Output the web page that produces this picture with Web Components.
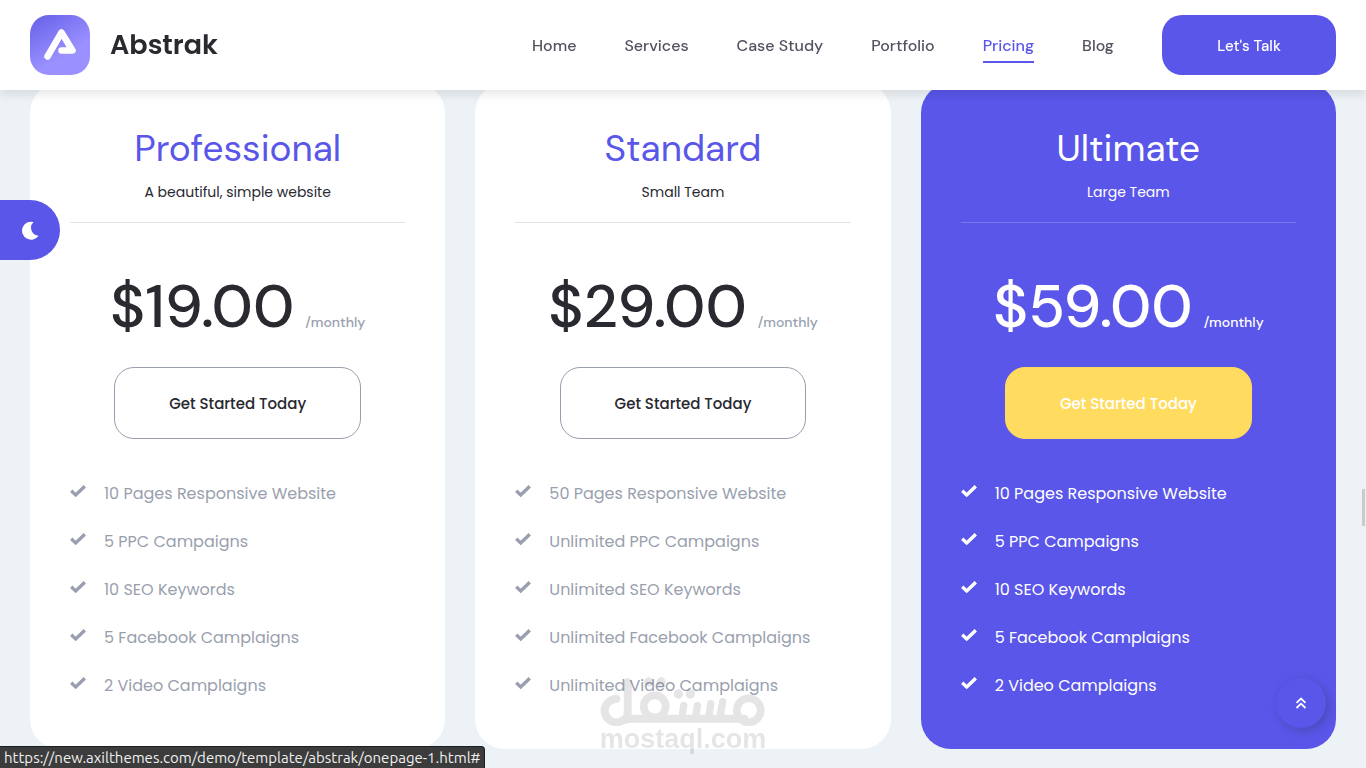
<!DOCTYPE html>
<html lang="en">
<head>
<meta charset="utf-8">
<title>Abstrak - Pricing</title>
<style>
  :root {
    --primary: #5956e9;
    --dark: #292930;
    --body: #525260;
    --muted: #999fae;
    --line: #dfe5ea;
    --yellow: #ffdc60;
    --heading: "DM Sans", Inter, sans-serif;
    --text: Poppins, "Open Sans", sans-serif;
  }
  body { margin: 0; min-height: 100vh; background: #ecf2f6; font-family: var(--text); color: var(--dark); }
</style>
</head>
<body>
<site-header></site-header>
<pricing-section>
  <pricing-card plan="Professional" price="$19.00" features="10 Pages Responsive Website|5 PPC Campaigns|10 SEO Keywords|5 Facebook Camplaigns|2 Video Camplaigns">A beautiful, simple website</pricing-card>
  <pricing-card plan="Standard" price="$29.00" features="50 Pages Responsive Website|Unlimited PPC Campaigns|Unlimited SEO Keywords|Unlimited Facebook Camplaigns|Unlimited Video Camplaigns">Small Team</pricing-card>
  <pricing-card active plan="Ultimate" price="$59.00" features="10 Pages Responsive Website|5 PPC Campaigns|10 SEO Keywords|5 Facebook Camplaigns|2 Video Camplaigns">Large Team</pricing-card>
</pricing-section>
<theme-toggle></theme-toggle>
<back-to-top></back-to-top>
<scroll-thumb></scroll-thumb>
<water-mark></water-mark>
<status-bar>https://new.axilthemes.com/demo/template/abstrak/onepage-1.html#</status-bar>

<script>
function define(name, render) {
  customElements.define(name, class extends HTMLElement {
    connectedCallback() {
      if (this.shadowRoot) return;
      const t = document.createElement('template');
      t.innerHTML = render(this);
      this.attachShadow({ mode: 'open' }).append(t.content.cloneNode(true));
    }
  });
}

define('nav-item', el => `
  <style>
    :host { display: block; }
    a { position: relative; display: block; padding-top: 2px; font: 500 16px/32px var(--heading); color: var(--body); text-decoration: none; }
    :host([current]) a { color: var(--primary); }
    :host([current]) a::after { content: ""; position: absolute; left: 0; right: 0; bottom: -1px; height: 2px; background: var(--primary); }
  </style>
  <a href="#"><slot></slot></a>`);

define('site-header', () => `
  <style>
    :host { display: block; position: fixed; inset: 0 0 auto 0; z-index: 5; background: #fff; box-shadow: 0 4px 10px rgba(0,0,0,.1); }
    header { display: flex; align-items: center; justify-content: space-between; height: 90px; padding: 0 30px; }
    .brand { display: flex; align-items: center; gap: 20px; color: var(--dark); text-decoration: none; font: 600 27px/40px var(--text); }
    .brand svg { display: block; }
    nav { display: flex; align-items: center; gap: 48px; }
    button { width: 174px; height: 60px; padding: 2px 0 0; border: 0; border-radius: 20px; background: var(--primary); color: #fff; font: 500 15px/24px var(--heading); }
  </style>
  <header>
    <a class="brand" href="#">
      <svg width="60" height="60" viewBox="0 0 60 60" aria-hidden="true">
        <defs><linearGradient id="g" x1="0" y1="0" x2=".6" y2="1"><stop offset=".1" stop-color="#6b66ea"/><stop offset=".75" stop-color="#9a90ff"/></linearGradient></defs>
        <rect width="60" height="60" rx="19" fill="url(#g)"/>
        <path d="M17.500 41.500L31.500 17.500L42.500 35.500H31.500" fill="none" stroke="#fff" stroke-width="6.500" stroke-linecap="round" stroke-linejoin="round"/>
      </svg>
      <span>Abstrak</span>
    </a>
    <nav>
      <nav-item>Home</nav-item><nav-item>Services</nav-item><nav-item>Case Study</nav-item>
      <nav-item>Portfolio</nav-item><nav-item current>Pricing</nav-item><nav-item>Blog</nav-item>
      <button type="button">Let's Talk</button>
    </nav>
  </header>`);

define('pricing-section', () => `
  <style>
    :host { display: grid; grid-template-columns: repeat(3, minmax(0, 1fr)); gap: 30px; padding: 83px 30px 19px; }
  </style>
  <slot></slot>`);

define('check-item', () => `
  <style>
    :host { display: flex; align-items: center; gap: 18px; font: 400 16px/48px var(--text); }
    svg { flex: none; padding-bottom: 6px; }
  </style>
  <svg width="16" height="14" viewBox="0 0 16 14" aria-hidden="true"><path d="M1.200 6.800L5.700 11L14.800 2.200" fill="none" stroke="currentColor" stroke-width="3.400"/></svg>
  <span><slot></slot></span>`);

define('pricing-card', el => `
  <style>
    :host { display: block; box-sizing: border-box; padding: 38px 40px 39px; border-radius: 30px; background: #fff; text-align: center; }
    h2 { margin: 0; font: 400 37px/54px var(--heading); color: var(--primary); }
    .sub { margin: 5px 0 0; padding-bottom: 18px; border-bottom: 1px solid var(--line); font: 400 14px/24px var(--text); }
    .price { display: flex; align-items: baseline; justify-content: center; gap: 11px; margin-top: 48px; }
    .amount { font: 500 60px/72px var(--heading); }
    .per { font: 500 14px/24px var(--heading); color: var(--muted); }
    button { height: 72px; margin-top: 24px; padding: 2px 54px 0; border: 1px solid var(--muted); border-radius: 20px; background: none; color: var(--dark); font: 500 15px/24px var(--text); }
    ul { margin: 31px 0 0; padding: 0; list-style: none; text-align: left; color: var(--muted); }
    :host([active]) { background: var(--primary); color: #fff; }
    :host([active]) :is(h2, .per, ul) { color: #fff; }
    :host([active]) .sub { border-color: rgba(255,255,255,.2); }
    :host([active]) button { background: var(--yellow); border-color: var(--yellow); color: #fff; }
  </style>
  <h2>${el.getAttribute('plan')}</h2>
  <p class="sub"><slot></slot></p>
  <div class="price"><span class="amount">${el.getAttribute('price')}</span><span class="per">/monthly</span></div>
  <button type="button">Get Started Today</button>
  <ul>${el.getAttribute('features').split('|').map(f => `<li><check-item>${f}</check-item></li>`).join('')}</ul>`);

define('theme-toggle', () => `
  <style>
    :host { display: block; position: fixed; left: 0; top: 200px; z-index: 4; }
    button { display: grid; place-items: center; width: 60px; height: 60px; padding: 0; border: 0; border-radius: 0 30px 30px 0; background: var(--primary); color: #fff; }
  </style>
  <button type="button" aria-label="Dark mode"><svg width="18" height="20" viewBox="0 0 18 20"><path d="M12.500 2A9 9 0 1 0 17.500 15.700A8 8 0 0 1 12.500 2Z" fill="currentColor"/></svg></button>`);

define('back-to-top', () => `
  <style>
    :host { display: block; position: fixed; right: 40px; bottom: 40px; z-index: 4; }
    a { display: grid; place-items: center; width: 50px; height: 50px; border-radius: 50%; background: var(--primary); color: #fff; box-shadow: 3px 3px 8px rgba(41,41,48,.25); }
  </style>
  <a href="#" aria-label="Back to top"><svg width="12" height="12" viewBox="0 0 12 12"><path d="M1.500 5.800L6 1.500L10.500 5.800M1.500 11L6 6.700L10.500 11" fill="none" stroke="currentColor" stroke-width="1.800"/></svg></a>`);

define('scroll-thumb', () => `
  <style>:host { display: block; position: fixed; right: 1px; top: 489px; width: 3px; height: 37px; background: #cbcbcd; z-index: 4; }</style>`);

define('water-mark', () => `
  <style>
    :host { display: block; position: fixed; left: 50%; bottom: 15px; z-index: 4; transform: translateX(-50%); opacity: .1; color: #000; pointer-events: none; }
    svg { display: block; width: 166px; }
    span { display: block; font: 700 27px/27px "Liberation Sans", Arial, sans-serif; text-align: center; }
  </style>
  <svg viewBox="16 12 498 146" role="img" aria-label="mostaql">
    <g fill="none" stroke="currentColor" stroke-linecap="round" stroke-linejoin="round">
      <path stroke-width="24" d="M66 78A35 35 0 1 0 80 145Q100 140 100 118V28M80 145Q90 138 110 137H450"/>
      <circle cx="181" cy="100" r="33" stroke-width="23"/>
      <path stroke-width="22" d="M268 98L262 135M309 98L303 135M349 92L343 135M385 86L376 135"/>
      <circle cx="463" cy="112" r="36" stroke-width="23"/>
    </g>
    <g fill="currentColor"><circle cx="163" cy="27" r="14"/><circle cx="200" cy="27" r="14"/><circle cx="252" cy="63" r="14"/><circle cx="288" cy="63" r="14"/></g>
  </svg>
  <span>mostaql.com</span>`);

define('status-bar', () => `
  <style>
    :host { display: block; position: fixed; left: 0; bottom: 0; z-index: 6; box-sizing: border-box; height: 22px; padding: 0 4px; border-top: 1px solid #1e1e1e; border-right: 1px solid #1e1e1e; border-radius: 0 4px 0 0; background: #3c3c3c; color: #f0f0f0; font: 400 15px/22px Ubuntu, Roboto, sans-serif; }
  </style>
  <slot></slot>`);
</script>
</body>
</html>
